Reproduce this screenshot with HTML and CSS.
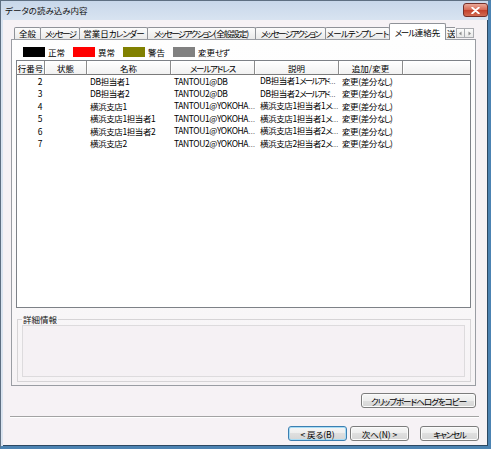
FILE: index.html
```html
<!DOCTYPE html>
<html lang="ja">
<head>
<meta charset="utf-8">
<link rel="stylesheet" href="styles.css">
</head>
<body>
<div class="window">
  <div class="titlebar">
    <span class="title">データの読み込み内容</span>
    <div class="close"><svg width="9" height="7" viewBox="0 0 9 7"><path d="M1.2 0.6 L7.8 6.4 M7.8 0.6 L1.2 6.4" stroke="#fff" stroke-width="1.9" stroke-linecap="round"/></svg></div>
  </div>
  <div class="client">
    <div class="tabbar">
      <div class="tabs">
        <div class="tab t1">全般</div>
        <div class="tab t2"><span class="k k2">メッセージ</span></div>
        <div class="tab t3">営業日<span class="k k1">カレンダー</span></div>
        <div class="tab t4"><span class="k k2">メッセージアクション</span>(<span class="kj">全般設定</span>)</div>
        <div class="tab t5"><span class="k k2">メッセージアクション</span></div>
        <div class="tab t6"><span class="k k1">メールテンプレート</span></div>
        <div class="tab sel"><span class="k">メール</span>連絡先</div>
        <div class="tab tp">送</div>
      </div>
      <div class="arrows">
        <div class="arr"><svg width="5" height="5" viewBox="0 0 5 5"><path d="M3.5 0.5 L1 2.5 L3.5 4.5 Z" fill="#8a8a8a"/></svg></div>
        <div class="arr arr2"><svg width="5" height="5" viewBox="0 0 5 5"><path d="M1.5 0.5 L4 2.5 L1.5 4.5 Z" fill="#8a8a8a"/></svg></div>
      </div>
    </div>
    <div class="panel">
      <div class="legend">
        <div class="legend-item"><span class="swatch black"></span><span class="ltext">正常</span></div>
        <div class="legend-item"><span class="swatch red"></span><span class="ltext">異常</span></div>
        <div class="legend-item"><span class="swatch olive"></span><span class="ltext">警告</span></div>
        <div class="legend-item"><span class="swatch gray"></span><span class="ltext">変更<span class="k">せず</span></span></div>
      </div>
      <div class="list">
        <table>
          <colgroup>
            <col class="c1"><col class="c2"><col class="c3"><col class="c4"><col class="c5"><col class="c6"><col class="c7">
          </colgroup>
          <thead>
            <tr><th>行番号</th><th>状態</th><th>名称</th><th><span class="k">メールアドレス</span></th><th>説明</th><th>追加/変更</th><th></th></tr>
          </thead>
          <tbody>
            <tr><td class="num">2</td><td></td><td>DB担当者1</td><td>TANTOU1@DB</td><td class="desc indent">DB担当者1<span class="k kd">メールアド</span><span class="ell">…</span></td><td class="chg">変更(差分<span class="k">なし</span>)</td><td></td></tr>
            <tr><td class="num">3</td><td></td><td>DB担当者2</td><td>TANTOU2@DB</td><td class="desc indent">DB担当者2<span class="k kd">メールアド</span><span class="ell">…</span></td><td class="chg">変更(差分<span class="k">なし</span>)</td><td></td></tr>
            <tr><td class="num">4</td><td></td><td>横浜支店1</td><td>TANTOU1@YOKOHA<span class="ell">…</span></td><td class="desc">横浜支店1担当者1<span class="k">メ</span><span class="ell">…</span></td><td class="chg">変更(差分<span class="k">なし</span>)</td><td></td></tr>
            <tr><td class="num">5</td><td></td><td>横浜支店1担当者1</td><td>TANTOU1@YOKOHA<span class="ell">…</span></td><td class="desc">横浜支店1担当者1<span class="k">メ</span><span class="ell">…</span></td><td class="chg">変更(差分<span class="k">なし</span>)</td><td></td></tr>
            <tr><td class="num">6</td><td></td><td>横浜支店1担当者2</td><td>TANTOU1@YOKOHA<span class="ell">…</span></td><td class="desc">横浜支店1担当者2<span class="k">メ</span><span class="ell">…</span></td><td class="chg">変更(差分<span class="k">なし</span>)</td><td></td></tr>
            <tr><td class="num">7</td><td></td><td>横浜支店2</td><td>TANTOU2@YOKOHA<span class="ell">…</span></td><td class="desc">横浜支店2担当者2<span class="k">メ</span><span class="ell">…</span></td><td class="chg">変更(差分<span class="k">なし</span>)</td><td></td></tr>
          </tbody>
        </table>
      </div>
      <fieldset class="detail">
        <legend>詳細情報</legend>
        <div class="detail-box"></div>
      </fieldset>
    </div>
    <div class="copy-row"><button class="btn copy">クリップボードへログをコピー</button></div>
    <div class="sep"></div>
    <div class="nav-row">
      <button class="btn def back">&lt; 戻る(B)</button>
      <button class="btn next">次へ(N) &gt;</button>
      <button class="btn"><span class="k">キャンセル</span></button>
    </div>
  </div>
</div>
</body>
</html>
```
FILE: styles.css
```css
* { box-sizing: border-box; }
html, body { margin: 0; padding: 0; }
body {
  width: 491px;
  height: 449px;
  overflow: hidden;
  font-family: "Noto Sans CJK JP", sans-serif;
  font-size: 8.5px;
  font-feature-settings: "palt";
  color: #000;
  background: #fff;
}
.k { letter-spacing: -1.2px; }
.k1 { letter-spacing: -0.8px; }
.k2 { letter-spacing: -1.6px; }
.kj { letter-spacing: -1px; }
.window {
  width: 491px;
  height: 449px;
  display: flex;
  flex-direction: column;
  background: linear-gradient(#c8d7ea, #d9e4f1 20px, #dae4f0);
  border-left: 1px solid #5e6f82;
  border-top: 1px solid #5e6f82;
  border-right: 3px solid #4c83b2;
  border-bottom: 3px solid #4c83b2;
  padding-left: 2px;
}
.titlebar {
  height: 19px;
  display: flex;
  align-items: flex-start;
  flex: none;
}
.title {
  margin: 4px 0 0 2px;
  line-height: 10px;
  color: #111;
}
.close {
  margin-left: auto;
  margin-top: 2px;
  width: 25px;
  height: 14px;
  border: 1px solid #74302a;
  border-radius: 3px;
  background: linear-gradient(#eaa898, #d66a55 48%, #c4412c 52%, #d26c52);
  display: flex;
  align-items: center;
  justify-content: center;
}
.client {
  flex: 1;
  background: #f6f2f5;
  border-right: 1px solid #2c4862;
  border-bottom: 1px solid #2c4862;
  display: flex;
  flex-direction: column;
}
.tabbar {
  margin: 3px 0 0 11px;
  height: 17px;
  display: flex;
  position: relative;
  z-index: 1;
}
.tabs {
  width: 441px;
  height: 17px;
  overflow: hidden;
  display: flex;
  align-items: flex-end;
}
.tab {
  flex: none;
  height: 12px;
  margin-bottom: 1px;
  margin-left: -1px;
  border: 1px solid #8f9298;
  border-bottom: none;
  border-radius: 2px 2px 0 0;
  background: linear-gradient(#fcfcfc, #e9e9e9);
  text-align: center;
  line-height: 11px;
  white-space: nowrap;
  overflow: hidden;
}
.t1 { width: 27px; margin-left: 0; }
.t2 { width: 40px; }
.t3 { width: 69px; }
.t4 { width: 109px; }
.t5 { width: 71px; }
.t6 { width: 65px; }
.sel {
  width: 57px;
  height: 17px;
  margin-bottom: 0;
  padding-top: 3px;
  background: #fff;
}
.tp { width: 14px; text-align: left; padding-left: 1px; }
.arrows {
  display: flex;
  margin: 5px 0 0 1px;
}
.arr {
  width: 9px;
  height: 10px;
  border: 1px solid #a9abb0;
  background: linear-gradient(#fbfbfb, #e8e8e8);
  display: flex;
  align-items: center;
  justify-content: center;
}
.arr2 { width: 10px; margin-left: -1px; }
.panel {
  margin: -1px 0 0 8px;
  width: 465px;
  height: 347px;
  border: 1px solid #9a9da3;
  background: linear-gradient(#fefefe, #faf9fa 60%, #f6f3f5);
  display: flex;
  flex-direction: column;
  flex: none;
}
.legend {
  display: flex;
  align-items: center;
  margin: 7px 0 0 11px;
  height: 10px;
}
.legend-item {
  display: flex;
  align-items: center;
  margin-right: 7px;
}
.swatch {
  width: 22px;
  height: 10px;
  margin-right: 3px;
}
.black { background: #000; }
.red { background: #ff0000; }
.olive { background: #808000; }
.gray { background: #808080; }
.ltext { line-height: 10px; width: 18px; white-space: nowrap; }
.list {
  margin: 3px 4px 0 4px;
  height: 248px;
  border: 1px solid #7d8187;
  background: #fff;
  overflow: hidden;
  flex: none;
}
table {
  border-collapse: separate;
  border-spacing: 0;
  table-layout: fixed;
  width: 453px;
}
.c1 { width: 28px; }
.c2 { width: 42px; }
.c3 { width: 84px; }
.c4 { width: 84px; }
.c5 { width: 84px; }
.c6 { width: 64px; }
.c7 { width: 67px; }
th {
  font-weight: normal;
  height: 14px;
  padding: 0;
  line-height: 12px;
  text-align: center;
  border-right: 1px solid #8c8c8c;
  border-bottom: 1px solid #7a7a7a;
  box-shadow: inset 1px 1px 0 #fff;
  background: linear-gradient(#ffffff, #f1f1f1);
  white-space: nowrap;
  overflow: hidden;
}
th:last-child { border-right: none; }
td {
  height: 11.6px;
  line-height: 11.6px;
  padding: 0 0 0 3px;
  letter-spacing: -0.4px;
  white-space: nowrap;
  overflow: hidden;
}
td .k { letter-spacing: -1.2px; }
td .kd { letter-spacing: -1.8px; }
td.num { text-align: right; padding: 0 3px 0 0; }
td.desc { padding-left: 5px; }
td.indent { padding-left: 5px; }
td.chg { padding-left: 3px; }
.ell { font-family: "Liberation Sans", sans-serif; font-size: 7px; letter-spacing: 0; }
.detail {
  margin: 7px 4px 0 5px;
  padding: 1px 5px 4px 4px;
  border: 1px solid #d6d4d6;
  min-width: 0;
}
.detail legend {
  padding: 0 1px;
  font-size: 8.5px;
  line-height: 9px;
  color: #111;
}
.detail-box {
  height: 52px;
  border: 1px solid #dddbdd;
  background: #f5f1f4;
}
.copy-row {
  display: flex;
  justify-content: flex-end;
  margin: 7px 11px 0 0;
}
.btn {
  font-family: inherit;
  font-size: 8.5px;
  font-feature-settings: "palt";
  color: #000;
  height: 15px;
  width: 59px;
  padding: 0;
  line-height: 12px;
  white-space: nowrap;
  border: 1px solid #7c7c7c;
  border-radius: 3px;
  background: linear-gradient(#f6f6f6, #ededed 50%, #dfdfdf 50%, #d5d5d5);
  box-shadow: inset 0 0 0 1px #fbfbfb;
}
.copy { width: 115px; letter-spacing: -1px; }
.def {
  border-color: #3c7fb1;
  box-shadow: inset 0 0 0 1px #a8dcf5;
}
.sep {
  margin: 8px 8px 0 7px;
  height: 2px;
  border-top: 1px solid #a3a3a3;
  border-bottom: 1px solid #ffffff;
}
.nav-row {
  display: flex;
  justify-content: flex-end;
  margin: 8px 8px 0 0;
}
.back { margin-right: 3px; }
.next { margin-right: 11px; }
```
